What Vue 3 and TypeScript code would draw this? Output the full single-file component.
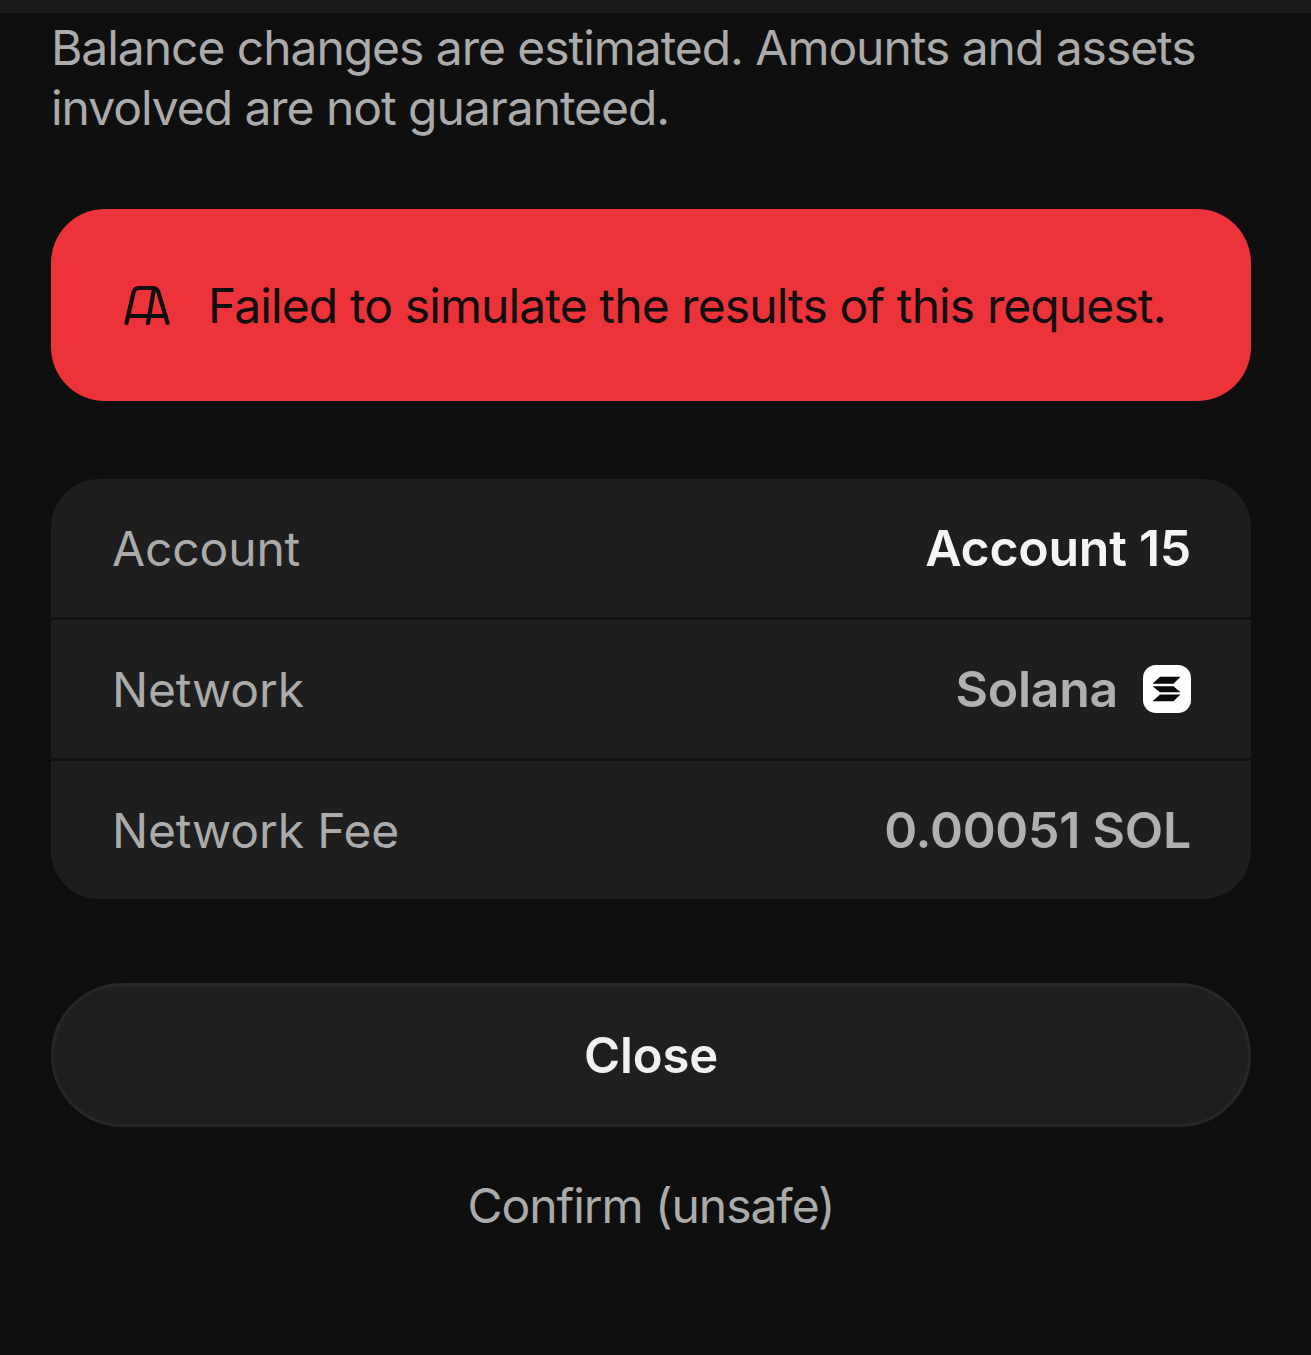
<script setup lang="ts">
interface Row { label: string; value: string; tone: string; icon?: boolean }
const rows: Row[] = [
  { label: 'Account', value: 'Account 15', tone: 'bright' },
  { label: 'Network', value: 'Solana', tone: 'dim', icon: true },
  { label: 'Network Fee', value: '0.00051 SOL', tone: 'dim' },
]
</script>

<template>
  <div class="page">
    <div class="topbar"></div>
    <div class="content">
      <p class="note">Balance changes are estimated. Amounts and assets involved are not guaranteed.</p>
      <div class="alert">
        <svg class="warn" viewBox="0 0 46 40" fill="none" stroke="#0f0f0f" stroke-width="4.2" stroke-linecap="round" stroke-linejoin="round">
          <path d="M2.5 38 L9.5 7.5 Q10.5 3 15 3 H29 Q33 3 34.5 7.5 L43.5 38" />
          <path d="M30 4 L24 38" />
          <path d="M4.5 31 H41.5" />
        </svg>
        <span class="alert-text">Failed to simulate the results of this request.</span>
      </div>
      <div class="card">
        <div v-for="r in rows" :key="r.label" class="row">
          <span class="label">{{ r.label }}</span>
          <span class="value" :class="r.tone">
            {{ r.value }}
            <svg v-if="r.icon" class="sol" viewBox="0 0 48 48">
              <rect width="48" height="48" rx="13" fill="#fff" />
              <path d="M17 11.8 H37.5 L30.5 18.8 H9.5 Z M9.5 21.2 H30.5 L37.5 27.2 H17 Z M17 29.6 H37.5 L30.5 36.2 H9.5 Z" fill="#0a0a0a" />
            </svg>
          </span>
        </div>
      </div>
      <button class="close" type="button">Close</button>
      <button class="confirm" type="button">Confirm (unsafe)</button>
    </div>
  </div>
</template>

<style>
html, body { margin: 0; background: #0f0f0f; }
</style>

<style scoped>
.page {
  width: 1311px;
  height: 1355px;
  overflow: hidden;
  background: #0f0f0f;
  font-family: Inter, "Liberation Sans", sans-serif;
}
.topbar {
  height: 13px;
  background: #1c1c1c;
}
.content {
  display: flex;
  flex-direction: column;
  padding: 5px 60px 0 51px;
}
.note {
  margin: 0;
  font-size: 48px;
  line-height: 60px;
  letter-spacing: -1.05px;
  color: #ababab;
}
.alert {
  margin-top: 71px;
  height: 192px;
  border-radius: 54px;
  background: #eb3339;
  display: flex;
  align-items: center;
  padding-left: 73px;
  gap: 38px;
}
.warn {
  width: 46px;
  height: 40px;
  flex: none;
}
.alert-text {
  font-size: 48px;
  letter-spacing: -0.9px;
  color: #0f0f0f;
  white-space: nowrap;
}
.card {
  margin-top: 78px;
  border-radius: 48px;
  background: #1e1e1e;
  overflow: hidden;
}
.row {
  height: 138px;
  display: flex;
  align-items: center;
  justify-content: space-between;
  padding: 0 60px 0 61px;
  border-bottom: 3px solid #131313;
}
.row:last-child {
  border-bottom: 0;
}
.label {
  font-size: 48px;
  letter-spacing: -0.15px;
  color: #ababab;
}
.value {
  font-size: 50px;
  font-weight: 600;
  letter-spacing: -0.25px;
  display: flex;
  align-items: center;
  gap: 25px;
}
.bright { color: #f5f5f5; }
.dim { color: #b0b0b0; }
.sol {
  width: 48px;
  height: 48px;
}
.close {
  margin-top: 84px;
  height: 144px;
  border-radius: 72px;
  border: 3px solid #272727;
  background: #1f1f1f;
  color: #f0f0f0;
  font-family: inherit;
  font-size: 49px;
  font-weight: 600;
  letter-spacing: -0.1px;
  padding: 0;
}
.confirm {
  margin-top: 48px;
  height: 60px;
  border: 0;
  background: none;
  color: #ababab;
  font-family: inherit;
  font-size: 48px;
  letter-spacing: -1.05px;
  padding: 0;
}
</style>
